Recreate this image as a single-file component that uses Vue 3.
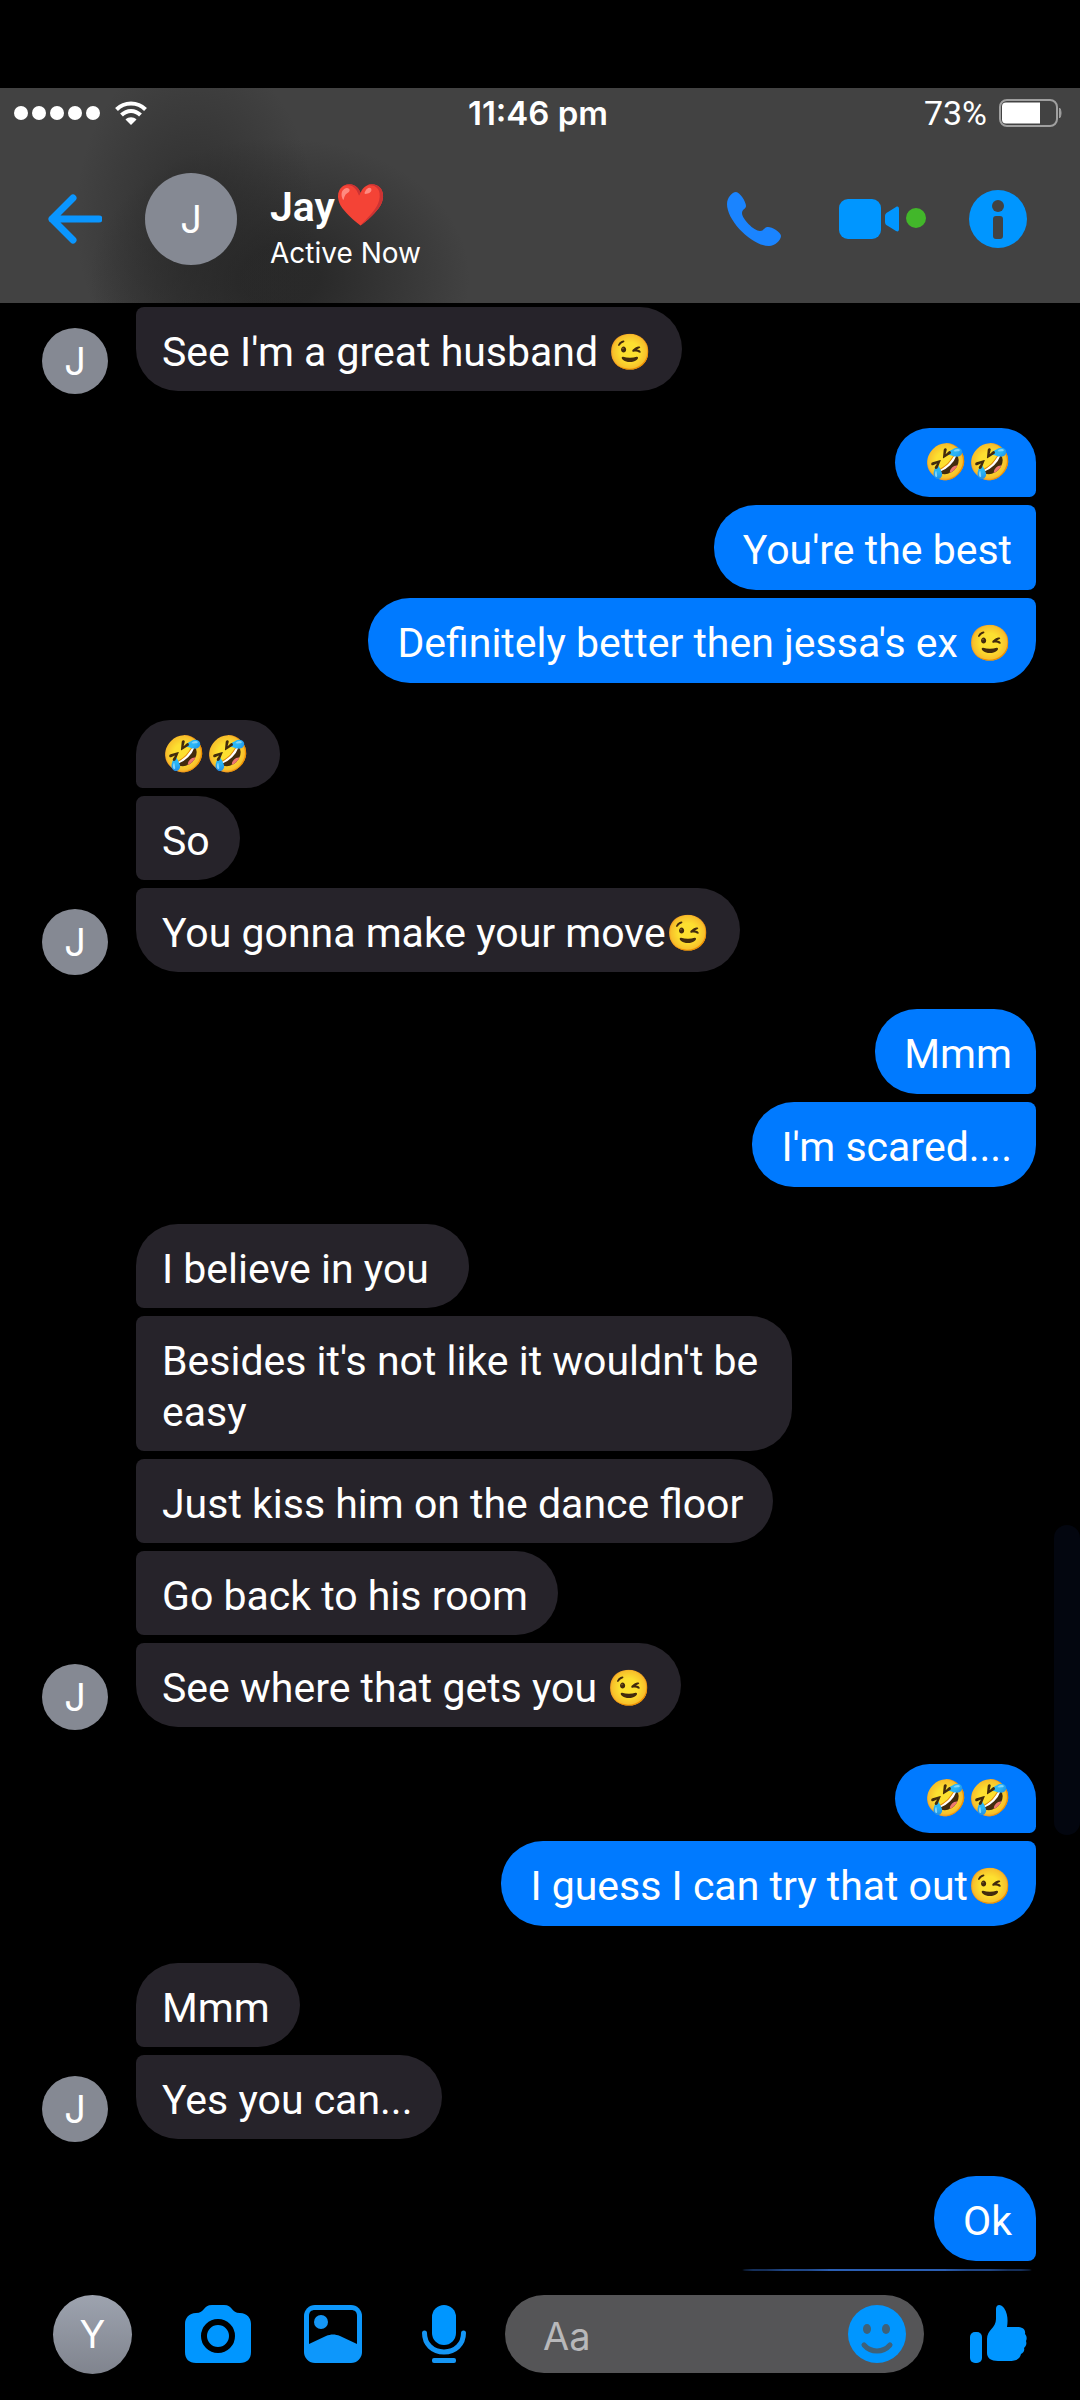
<script setup>
const groups = [
  { side: 'in', messages: [{ text: "See I'm a great husband ", emoji: '😉', joined: true }] },
  {
    side: 'out',
    messages: [
      { emoji: '🤣🤣' },
      { text: "You're the best" },
      { text: "Definitely better then jessa's ex ", emoji: '😉' },
    ],
  },
  {
    side: 'in',
    messages: [{ emoji: '🤣🤣' }, { text: 'So' }, { text: 'You gonna make your move', emoji: '😉' }],
  },
  { side: 'out', messages: [{ text: 'Mmm' }, { text: "I'm scared...." }] },
  {
    side: 'in',
    messages: [
      { text: 'I believe in you', trailing: true },
      { text: "Besides it's not like it wouldn't be easy" },
      { text: 'Just kiss him on the dance floor' },
      { text: 'Go back to his room' },
      { text: 'See where that gets you ', emoji: '😉' },
    ],
  },
  { side: 'out', messages: [{ emoji: '🤣🤣' }, { text: 'I guess I can try that out', emoji: '😉' }] },
  { side: 'in', messages: [{ text: 'Mmm' }, { text: 'Yes you can...' }] },
  { side: 'out', open: true, messages: [{ text: 'Ok' }] },
]

function bubbleClass(group, message, index) {
  return {
    first: index === 0 && !message.joined,
    last: index === group.messages.length - 1 && !group.open,
    reaction: !message.text,
    trailing: message.trailing,
  }
}
</script>

<template>
  <div class="app">
    <header class="header">
      <div class="status">
        <div class="status-left">
          <span class="signal"><i v-for="n in 5" :key="n"></i></span>
          <svg class="wifi" width="32" height="24" viewBox="0 0 32 24" aria-label="Wi-Fi">
            <g fill="none" stroke="#fff" stroke-width="4">
              <path d="M1.5 8.500C9.500.5 22.500.5 30.500 8.500" />
              <path d="M6.500 14C12 8.500 20 8.500 25.500 14" />
            </g>
            <path d="M16 24l-5.500-5.500c3-3 8-3 11 0z" fill="#fff" />
          </svg>
        </div>
        <span class="time">11:46 pm</span>
        <div class="status-right">
          <span class="percent">73%</span>
          <svg width="63" height="28" viewBox="0 0 63 28" aria-label="Battery">
            <rect x="1" y="1" width="57" height="26" rx="7" fill="none" stroke="#a0a0a0" stroke-width="2" />
            <path d="M7 3.500h34v21H7a4 4 0 0 1-4-4v-13a4 4 0 0 1 4-4z" fill="#fff" />
            <path d="M60.500 9c2 2 2 8 0 10z" fill="#a0a0a0" stroke="#a0a0a0" />
          </svg>
        </div>
      </div>
      <div class="bar">
        <button class="back" type="button" aria-label="Back">
          <svg width="54" height="50" viewBox="0 0 54 50">
            <path d="M25 4L4 25l21 21M4 25h47" fill="none" stroke="#0a96ff" stroke-width="7" stroke-linecap="round" stroke-linejoin="round" />
          </svg>
        </button>
        <span class="avatar large">J</span>
        <div class="contact">
          <h1>Jay<span class="heart">❤️</span></h1>
          <p>Active Now</p>
        </div>
        <div class="actions">
          <button type="button" aria-label="Call">
            <svg width="54" height="54" viewBox="0 0 54 54">
              <path d="M9 0C13 0 19 10 19 14c0 3-4 3-4 7 0 6 12 18 18 18 4 0 4-4 8-4 4 0 13 5 13 9 0 4-6 10-12 10C25 54 0 29 0 12 0 6 5 0 9 0z" fill="#1a84ff" />
            </svg>
          </button>
          <button class="video" type="button" aria-label="Video call">
            <svg width="88" height="42" viewBox="0 0 88 42">
              <rect x="0" y="1" width="42" height="40" rx="9" fill="#0096ff" />
              <path d="M49 14l8-5c2-1 3 0 3 2v20c0 2-1 3-3 2l-8-5c-2-1-3-2-3-4v-6c0-2 1-3 3-4z" fill="#0096ff" />
              <circle cx="77" cy="20" r="10" fill="#42b72a" />
            </svg>
          </button>
          <button type="button" aria-label="Info">
            <svg width="58" height="58" viewBox="0 0 58 58">
              <circle cx="29" cy="29" r="29" fill="#0096ff" />
              <circle cx="29" cy="16" r="6" fill="#424242" />
              <rect x="24" y="26" width="10" height="23" rx="3" fill="#424242" />
            </svg>
          </button>
        </div>
      </div>
    </header>

    <main class="thread">
      <section v-for="(group, g) in groups" :key="g" class="group" :class="group.side">
        <span v-if="group.side === 'in'" class="avatar small">J</span>
        <div class="stack">
          <p v-for="(message, i) in group.messages" :key="i" class="bubble" :class="bubbleClass(group, message, i)">{{ message.text }}<span v-if="message.emoji" class="emoji">{{ message.emoji }}</span></p>
        </div>
      </section>
      <div class="sliver"></div>
    </main>

    <form class="composer" @submit.prevent>
      <span class="avatar own">Y</span>
      <button class="camera" type="button" aria-label="Camera">
        <svg width="66" height="58" viewBox="0 0 66 58">
          <path d="M11 8c9 0 7-8 16-8h12c9 0 7 8 16 8 7 0 11 5 11 11v28c0 7-4 11-11 11H11C4 58 0 54 0 47V19C0 13 4 8 11 8z" fill="#0096ff" />
          <circle cx="33" cy="31" r="14" fill="#0096ff" stroke="#000" stroke-width="6" />
        </svg>
      </button>
      <button class="gallery" type="button" aria-label="Photos">
        <svg width="58" height="58" viewBox="0 0 58 58">
          <rect width="58" height="58" rx="11" fill="#0d97fb" />
          <path d="M11 5h36c4 0 6 2 6 6v28L36 31c-5-2-9-2-14 0L5 39V11c0-4 2-6 6-6z" fill="#000" />
          <circle cx="17" cy="17" r="7" fill="#1596f5" />
        </svg>
      </button>
      <button class="mic" type="button" aria-label="Voice message">
        <svg width="44" height="58" viewBox="0 0 44 58">
          <rect x="10" y="0" width="24" height="40" rx="12" fill="#0096ff" />
          <path d="M2.500 28c0 11 8 19 19.500 19s19.500-8 19.500-19" fill="none" stroke="#1596f5" stroke-width="5" stroke-linecap="round" />
          <rect x="10" y="53" width="24" height="5" rx="2" fill="#1596f5" />
        </svg>
      </button>
      <div class="field">
        <input type="text" placeholder="Aa" aria-label="Message" />
        <button type="button" aria-label="Emoji">
          <svg width="58" height="58" viewBox="0 0 58 58">
            <circle cx="29" cy="29" r="29" fill="#0096ff" />
            <ellipse cx="19" cy="24" rx="4" ry="5" fill="#3f6178" />
            <ellipse cx="38" cy="24" rx="4" ry="5" fill="#3f6178" />
            <path d="M16 40c7 8 19 8 26 0" fill="none" stroke="#3f6178" stroke-width="5" stroke-linecap="round" />
          </svg>
        </button>
      </div>
      <button class="like" type="button" aria-label="Like">
        <svg width="57" height="58" viewBox="0 0 57 58">
          <rect x="0" y="27" width="12" height="31" rx="5" fill="#0096ff" />
          <path d="M26 4c0-5 5-5 8-1 4 6 4 13 3 19h10c5 0 9 2 8 7 2 2 2 5 1 7 1 3 0 5-2 7 1 3-1 5-3 6-1 5-5 7-12 7H28c-7 0-11-3-11-8V34c0-9 9-11 9-20z" fill="#0096ff" />
        </svg>
      </button>
    </form>
    <div class="scrollbar"></div>
  </div>
</template>

<style>
body {
  background: #000;
}
</style>

<style scoped>
.app {
  position: relative;
  display: flex;
  flex-direction: column;
  box-sizing: border-box;
  min-height: 100vh;
  padding-top: 88px;
  background: #000;
  color: #fff;
  font-family: Inter, 'Liberation Sans', sans-serif;
}

button {
  display: flex;
  padding: 0;
  border: 0;
  background: none;
}

svg {
  display: block;
}

h1,
p {
  margin: 0;
}

.header {
  height: 215px;
  background:
    radial-gradient(ellipse 120px 170px at 195px 130px, rgba(40, 40, 40, 0.7) 10%, rgba(40, 40, 40, 0) 100%),
    radial-gradient(ellipse 190px 140px at 280px 190px, rgba(40, 40, 40, 0.95) 20%, rgba(40, 40, 40, 0) 100%),
    #424242;
}

.status {
  display: grid;
  grid-template-columns: 1fr auto 1fr;
  align-items: center;
  height: 50px;
  padding: 0 18px 0 14px;
}

.status-left {
  display: flex;
  align-items: center;
  gap: 15px;
}

.signal {
  display: flex;
  gap: 4px;
}

.signal i {
  width: 14px;
  height: 14px;
  border-radius: 50%;
  background: #fff;
}

.time {
  font-size: 33px;
  font-weight: 600;
}

.status-right {
  display: flex;
  align-items: center;
  justify-content: flex-end;
  gap: 12px;
  font-family: Roboto, sans-serif;
  font-size: 34px;
}

.bar {
  display: flex;
  align-items: center;
  height: 162px;
  padding: 0 53px 0 48px;
}

.avatar {
  display: flex;
  flex: none;
  align-items: center;
  justify-content: center;
  border-radius: 50%;
  background: #858993;
  font-size: 38px;
}

.large {
  width: 92px;
  height: 92px;
  margin-left: 43px;
}

.contact {
  flex: 1;
  margin-left: 33px;
  padding-top: 16px;
}

.contact h1 {
  font-family: Roboto, sans-serif;
  font-size: 41px;
  font-weight: 600;
  line-height: 52px;
}

.heart {
  font-size: 41px;
  vertical-align: 2px;
  line-height: 1;
}

.contact p {
  font-size: 28px;
  line-height: 40px;
}

.actions {
  display: flex;
  align-items: center;
}

.video {
  margin: 0 42px 0 58px;
}

.thread {
  display: flex;
  flex: 1;
  flex-direction: column;
  gap: 37px;
  padding: 4px 44px 0 42px;
}

.group {
  display: flex;
  align-items: flex-end;
  gap: 28px;
}

.out {
  justify-content: flex-end;
}

.stack {
  display: flex;
  flex-direction: column;
  align-items: flex-start;
  gap: 8px;
  max-width: 656px;
}

.out .stack {
  align-items: flex-end;
  max-width: 720px;
}

.small {
  width: 66px;
  height: 66px;
  margin-bottom: -3px;
  font-size: 38px;
}

.bubble {
  box-sizing: border-box;
  padding: 20px 30px 13px 26px;
  border-radius: 8px 42px 42px 8px;
  background: #26232a;
  font-family: Roboto, sans-serif;
  font-size: 41px;
  line-height: 51px;
}

.in .first {
  border-top-left-radius: 42px;
}

.in .last {
  border-bottom-left-radius: 42px;
}

.out .bubble {
  padding: 20px 24px 14px 29px;
  border-radius: 42px 8px 8px 42px;
  background: #007aff;
}

.out .first {
  border-top-right-radius: 42px;
}

.out .last {
  border-bottom-right-radius: 42px;
}

.bubble.trailing {
  padding-right: 40px;
}

.bubble.reaction,
.out .bubble.reaction {
  padding-top: 9px;
  padding-bottom: 8px;
}

.out .bubble.reaction {
  padding-bottom: 9px;
}

.emoji {
  font-size: 35px;
  line-height: 1;
  vertical-align: 2px;
}

.sliver {
  align-self: flex-end;
  width: 290px;
  height: 2px;
  margin: -29px 4px 0 0;
  border-radius: 50%;
  background: #2b5fb4;
}

.composer {
  display: flex;
  align-items: center;
  box-sizing: border-box;
  height: 129px;
  padding: 0 53px 3px;
}

.own {
  width: 79px;
  height: 79px;
  background: linear-gradient(#9da3af, #80848e);
}

.camera {
  margin-left: 53px;
}

.gallery {
  margin-left: 53px;
}

.mic {
  margin-left: 60px;
}

.field {
  display: flex;
  flex: 1;
  align-items: center;
  box-sizing: border-box;
  min-width: 0;
  height: 78px;
  margin-left: 39px;
  padding: 0 18px 0 38px;
  border-radius: 39px;
  background: #555557;
}

.field input {
  flex: 1;
  min-width: 0;
  padding: 4px 0 0;
  border: 0;
  outline: 0;
  background: none;
  color: #fff;
  font: 38px Inter, 'Liberation Sans', sans-serif;
}

.field input::placeholder {
  color: #b8b8ba;
  opacity: 1;
}

.like {
  margin-left: 46px;
}

.scrollbar {
  position: absolute;
  top: 1525px;
  right: 0;
  width: 26px;
  height: 310px;
  border-radius: 13px;
  background: #03060f;
}
</style>
